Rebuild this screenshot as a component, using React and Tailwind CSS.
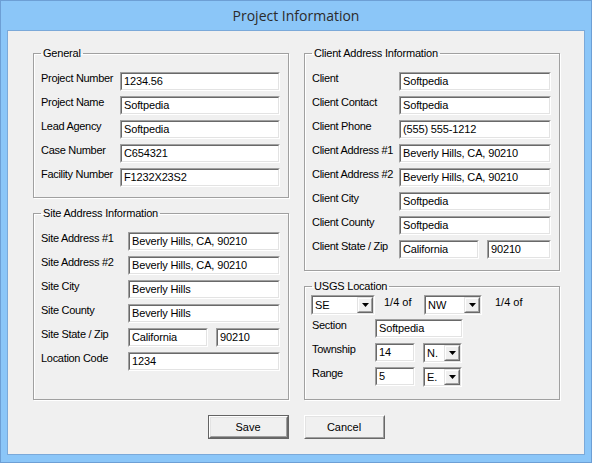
import React from "react";

const font = { fontFamily: '"Liberation Sans", Arial, sans-serif' };

// classic sunken edit box
const TextBox = ({ value, w = "w-[160px]" }) => (
  <div className={`${w} h-[19px] shrink-0 border border-t-[#a0a0a0] border-l-[#a0a0a0] border-b-white border-r-white`}>
    <div className="h-full bg-white border border-t-[#696969] border-l-[#696969] border-b-[#e3e3e3] border-r-[#e3e3e3] px-[2px] leading-[15px] tracking-[-0.15px] whitespace-nowrap overflow-hidden">
      {value}
    </div>
  </div>
);

const Arrow = () => (
  <svg width="7" height="4" viewBox="0 0 7 4">
    <path d="M0 0h7L3.5 4z" fill="#000" />
  </svg>
);

const Combo = ({ value, w }) => (
  <div className={`${w} h-[20px] shrink-0 border border-t-[#a0a0a0] border-l-[#a0a0a0] border-b-white border-r-white`}>
    <div className="h-full flex bg-white border border-t-[#696969] border-l-[#696969] border-b-[#e3e3e3] border-r-[#e3e3e3]">
      <span className="flex-1 px-[2px] leading-[16px]">{value}</span>
      <span className="w-[16px] h-full border border-t-[#e3e3e3] border-l-[#e3e3e3] border-b-[#696969] border-r-[#696969]">
        <span className="w-full h-full flex items-center justify-center bg-[#f0f0f0] border border-t-white border-l-white border-b-[#a0a0a0] border-r-[#a0a0a0]">
          <Arrow />
        </span>
      </span>
    </div>
  </div>
);

const Row = ({ label, lw, children }) => (
  <div className="flex h-[19px]">
    <span className={`${lw} shrink-0 leading-[13px] tracking-[-0.3px] whitespace-nowrap`}>{label}</span>
    {children}
  </div>
);

const Group = ({ title, h, pt = "pt-[12px]", children }) => (
  <fieldset className={`w-[256px] ${h} border border-[#a0a0a0] shadow-[1px_1px_0_#fff,inset_1px_1px_0_#fff]`}>
    <legend className="ml-[7px] px-[2px] leading-[13px] tracking-[-0.2px]">{title}</legend>
    <div className={`pl-[7px] ${pt} flex flex-col gap-[5px]`}>{children}</div>
  </fieldset>
);

const RaisedButton = ({ label, isDefault }) => {
  const inner = (
    <div className="w-full h-full border border-t-white border-l-white border-b-[#696969] border-r-[#696969]">
      <div className="w-full h-full flex items-center justify-center border border-t-[#e3e3e3] border-l-[#e3e3e3] border-b-[#a0a0a0] border-r-[#a0a0a0]">
        {label}
      </div>
    </div>
  );
  return (
    <div className={`w-[81px] h-[24px] ${isDefault ? "border border-[#646464]" : ""}`}>{inner}</div>
  );
};

export default function App() {
  const general = [
    ["Project Number", "1234.56"],
    ["Project Name", "Softpedia"],
    ["Lead Agency", "Softpedia"],
    ["Case Number", "C654321"],
    ["Facility Number", "F1232X23S2"],
  ];
  const site = [
    ["Site Address #1", "Beverly Hills, CA, 90210"],
    ["Site Address #2", "Beverly Hills, CA, 90210"],
    ["Site City", "Beverly Hills"],
    ["Site County", "Beverly Hills"],
  ];
  const client = [
    ["Client", "Softpedia"],
    ["Client Contact", "Softpedia"],
    ["Client Phone", "(555) 555-1212"],
    ["Client Address #1", "Beverly Hills, CA, 90210"],
    ["Client Address #2", "Beverly Hills, CA, 90210"],
    ["Client City", "Softpedia"],
    ["Client County", "Softpedia"],
  ];

  return (
    <div className="w-[592px] h-[463px] bg-[#8bc6f8] border border-[#6d9fd5] flex flex-col text-[11px] text-black" style={font}>
      {/* title bar */}
      <div className="h-[29px] flex items-center justify-center text-[14px] text-[#2b2b2b]" style={{ fontFamily: '"Open Sans", "Noto Sans", sans-serif' }}>
        Project Information
      </div>

      {/* client area */}
      <div className="ml-[6px] w-[578px] h-[425px] bg-[#f0f0f0] border border-[#7ba9d9] pl-[25px] pt-[16px]">
        <div className="flex gap-[15px]">
          <div className="flex flex-col gap-[9px]">
            <Group title="General" h="h-[151px]">
              {general.map(([l, v]) => (
                <Row key={l} label={l} lw="w-[79px]">
                  <TextBox value={v} w="w-[160px]" />
                </Row>
              ))}
            </Group>
            <Group title="Site Address Information" h="h-[193px]">
              {site.map(([l, v]) => (
                <Row key={l} label={l} lw="w-[87px]">
                  <TextBox value={v} w="w-[152px]" />
                </Row>
              ))}
              <Row label="Site State / Zip" lw="w-[87px]">
                <TextBox value="California" w="w-[80px]" />
                <div className="ml-[8px]">
                  <TextBox value="90210" w="w-[64px]" />
                </div>
              </Row>
              <Row label="Location Code" lw="w-[87px]">
                <TextBox value="1234" w="w-[152px]" />
              </Row>
            </Group>
          </div>

          <div className="flex flex-col gap-[9px]">
            <Group title="Client Address Information" h="h-[224px]">
              {client.map(([l, v]) => (
                <Row key={l} label={l} lw="w-[87px]">
                  <TextBox value={v} w="w-[152px]" />
                </Row>
              ))}
              <Row label="Client State / Zip" lw="w-[87px]">
                <TextBox value="California" w="w-[80px]" />
                <div className="ml-[8px]">
                  <TextBox value="90210" w="w-[64px]" />
                </div>
              </Row>
            </Group>
            <Group title="USGS Location" h="h-[120px]" pt="pt-[2px]">
              <div className="flex h-[19px] -ml-[1px]">
                <Combo value="SE" w="w-[64px]" />
                <span className="ml-[9px] w-[40px] leading-[13px] pt-[1px]">1/4 of</span>
                <Combo value="NW" w="w-[58px]" />
                <span className="ml-[13px] leading-[13px] pt-[1px]">1/4 of</span>
              </div>
              <Row label="Section" lw="w-[63px]">
                <TextBox value="Softpedia" w="w-[88px]" />
              </Row>
              <Row label="Township" lw="w-[63px]">
                <TextBox value="14" w="w-[40px]" />
                <div className="ml-[8px]">
                  <Combo value="N." w="w-[39px]" />
                </div>
              </Row>
              <Row label="Range" lw="w-[63px]">
                <TextBox value="5" w="w-[40px]" />
                <div className="ml-[8px]">
                  <Combo value="E." w="w-[39px]" />
                </div>
              </Row>
            </Group>
          </div>
        </div>

        <div className="flex justify-center gap-[15px] mt-[15px] pr-[25px]">
          <RaisedButton label="Save" isDefault />
          <RaisedButton label="Cancel" />
        </div>
      </div>
    </div>
  );
}
